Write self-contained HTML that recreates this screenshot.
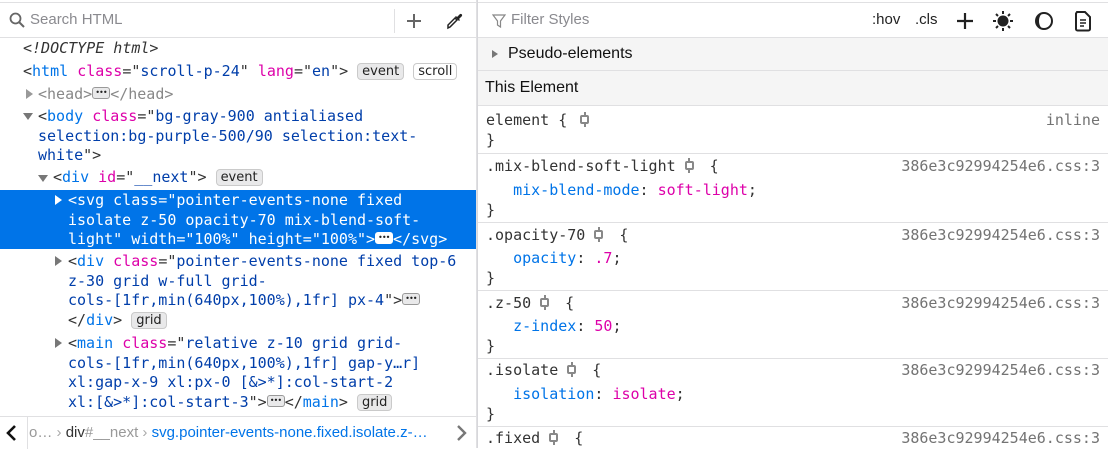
<!DOCTYPE html>
<html><head><style>
*{margin:0;padding:0;box-sizing:border-box}
body{width:1108px;height:448px;overflow:hidden;background:#fff;font-family:"Liberation Sans",sans-serif;position:relative}
.mono{font-family:"DejaVu Sans Mono",monospace;font-size:15px}
#left{position:absolute;left:0;top:0;width:477px;height:448px;border-right:1px solid #e0e0e2}
#right{position:absolute;left:477px;top:0;width:631px;height:448px;border-left:1px solid #d7d7db}
.tb{position:absolute;top:2px;left:0;right:0;height:36px;border-top:1px solid #e0e0e2;border-bottom:1px solid #e0e0e2;background:#fff}
.ph{color:#8a8a8f;font-size:15px;position:absolute;top:8px}
.ln{position:absolute;white-space:pre;line-height:19.5px;color:#333}
.t{color:#0074e8}.an{color:#dd00a9}.av{color:#003eaa}.p{color:#333}
.sel{position:absolute;left:0;width:476px;top:190px;height:59px;background:#0074e8}
.sel .ln,.sel span{color:#fff}
.bd{display:inline-block;font-family:"DejaVu Sans",sans-serif;font-size:13px;line-height:15px;padding:0 4px;border:1px solid #cacaca;background:#e9e9ea;border-radius:4px;color:#222;vertical-align:1px}
.bd.o{background:#fff}
.dots{display:inline-block;width:18px;height:12px;border:1px solid #999;background:#e9e9ea;border-radius:3px;vertical-align:0;position:relative}
.dots:after{content:"•••";position:absolute;left:2px;top:-5px;font-size:8px;letter-spacing:-1px;color:#222}
.tri{position:absolute;width:0;height:0}
.tr{border-top:5px solid transparent;border-bottom:5px solid transparent;border-left:7px solid #777}
.td{border-left:5px solid transparent;border-right:5px solid transparent;border-top:7px solid #777}
.rule{position:absolute;left:0;right:0;border-top:1px solid #e0e0e2}
.rl{position:absolute;left:8px;white-space:pre;color:#333;line-height:20px}
.src{position:absolute;right:8px;color:#737373;line-height:20px}
.gear{display:inline-block;width:15px;height:15px;vertical-align:-2px;position:relative;margin:0 4px}
.gear:before{content:"";position:absolute;left:3px;top:3px;width:9px;height:9px;border:2px solid #888;border-radius:2px;box-sizing:border-box}
.gear:after{content:"";position:absolute;left:6.5px;top:0;width:2px;height:15px;background:linear-gradient(#888 0 3px,transparent 3px 12px,#888 12px)}
.pr{color:#0074e8}.vl{color:#dd00a9}
</style></head><body>
<div id="left">
 <div class="tb">
  <svg style="position:absolute;left:9px;top:9px" width="16" height="16" viewBox="0 0 16 16"><circle cx="6.5" cy="6.5" r="5" fill="none" stroke="#666" stroke-width="1.8"/><path d="M10 10l5 5" stroke="#666" stroke-width="2"/></svg>
  <div class="ph" style="left:30px">Search HTML</div>
  <div style="position:absolute;left:394px;top:6px;width:1px;height:24px;background:#e0e0e2"></div>
  <svg style="position:absolute;left:406px;top:10px" width="16" height="16"><path d="M8 1v14M1 8h14" stroke="#666" stroke-width="2"/></svg>
  <svg style="position:absolute;left:446px;top:9px" width="18" height="18" viewBox="0 0 18 18"><path d="M2 16l2-1 7-7-2-2-7 7z" fill="none" stroke="#222" stroke-width="1.5"/><path d="M9 5l4 4 1-1-1-1 3-3a1.5 1.5 0 0 0-2-2l-3 3-1-1z" fill="#222"/></svg>
 </div>
 <div class="mono">
  <div class="ln" style="left:23px;top:39px;font-style:italic">&lt;!DOCTYPE html&gt;</div>
  <div class="ln" style="left:23px;top:62px">&lt;<span class="t">html</span> <span class="an">class</span>="<span class="av">scroll-p-24</span>" <span class="an">lang</span>="<span class="av">en</span>"&gt; <span class="bd">event</span> <span class="bd o">scroll</span></div>
  <div class="tri tr" style="left:26px;top:89px;border-left-color:#999"></div>
  <div class="ln" style="left:38px;top:85px;color:#888">&lt;head&gt;<span class="dots"></span>&lt;/head&gt;</div>
  <div class="tri td" style="left:23px;top:113px"></div>
  <div class="ln" style="left:38px;top:107px">&lt;<span class="t">body</span> <span class="an">class</span>="<span class="av">bg-gray-900 antialiased
selection:bg-purple-500/90 selection:text-
white</span>"&gt;</div>
  <div class="tri td" style="left:38px;top:175px"></div>
  <div class="ln" style="left:53px;top:168px">&lt;<span class="t">div</span> <span class="an">id</span>="<span class="av">__next</span>"&gt; <span class="bd">event</span></div>
 </div>
 <div class="sel mono">
  <div class="tri tr" style="left:55px;top:5px;border-left-color:#fff"></div>
  <div class="ln" style="left:68px;top:1px">&lt;svg class="pointer-events-none fixed
isolate z-50 opacity-70 mix-blend-soft-
light" width="100%" height="100%"&gt;<span class="dots" style="background:#fff;border-color:#fff"></span>&lt;/svg&gt;</div>
 </div>
 <div class="mono">
  <div class="tri tr" style="left:55px;top:256px"></div>
  <div class="ln" style="left:68px;top:252px">&lt;<span class="t">div</span> <span class="an">class</span>="<span class="av">pointer-events-none fixed top-6
z-30 grid w-full grid-
cols-[1fr,min(640px,100%),1fr] px-4</span>"&gt;<span class="dots"></span>
&lt;/<span class="t">div</span>&gt; <span class="bd">grid</span></div>
  <div class="tri tr" style="left:55px;top:338px"></div>
  <div class="ln" style="left:68px;top:334px">&lt;<span class="t">main</span> <span class="an">class</span>="<span class="av">relative z-10 grid grid-
cols-[1fr,min(640px,100%),1fr] gap-y…r]
xl:gap-x-9 xl:px-0 [&amp;&gt;*]:col-start-2
xl:[&amp;&gt;*]:col-start-3</span>"&gt;<span class="dots"></span>&lt;/<span class="t">main</span>&gt; <span class="bd">grid</span></div>
 </div>
 <div style="position:absolute;left:0;right:0;top:416px;height:32px;border-top:1px solid #e0e0e2;font-size:15px">
  <svg style="position:absolute;left:5px;top:7px" width="14" height="18"><path d="M10 2L3 9l7 7" fill="none" stroke="#111" stroke-width="2.6"/></svg>
  <div style="position:absolute;left:27px;top:0;width:1px;height:32px;background:#e0e0e2"></div>
  <div style="position:absolute;left:29px;top:7px;white-space:nowrap;color:#999">o…  <span style="color:#aaa">›</span>  <span style="color:#333">div</span>#__next  <span style="color:#aaa">›</span>  <span style="color:#0074e8">svg.pointer-events-none.fixed.isolate.z-…</span></div>
  <div style="position:absolute;left:446px;top:0;width:30px;height:31px;background:#fff"></div>
  <svg style="position:absolute;left:454px;top:7px" width="14" height="18"><path d="M4 2l7 7-7 7" fill="none" stroke="#777" stroke-width="2.4"/></svg>
 </div>
</div>
<div id="right">
 <div class="tb">
  <svg style="position:absolute;left:14px;top:11px" width="14" height="14" viewBox="0 0 14 14"><path d="M1 1h12L8.5 7v6L5.5 11V7z" fill="none" stroke="#888" stroke-width="1.2"/></svg>
  <div class="ph" style="left:33px">Filter Styles</div>
  <div style="position:absolute;left:394px;top:8px;font-size:15px;color:#222">:hov</div>
  <div style="position:absolute;left:437px;top:8px;font-size:15px;color:#222">.cls</div>
  <svg style="position:absolute;left:478px;top:9px" width="18" height="18"><path d="M9 1v16M1 9h16" stroke="#222" stroke-width="2.2"/></svg>
  <svg style="position:absolute;left:514px;top:7px" width="22" height="22" viewBox="0 0 22 22"><circle cx="11" cy="11" r="5.5" fill="#222"/><g stroke="#222" stroke-width="2"><path d="M11 1v3M11 18v3M1 11h3M18 11h3M4 4l2 2M16 16l2 2M4 18l2-2M16 6l2-2"/></g></svg>
  <svg style="position:absolute;left:556px;top:8px" width="20" height="20" viewBox="0 0 20 20"><circle cx="10" cy="10" r="8" fill="none" stroke="#222" stroke-width="2"/><path d="M10 2A8 8 0 0 0 10 18A5 8 0 0 1 10 2Z" fill="#222"/></svg>
  <svg style="position:absolute;left:596px;top:7px" width="18" height="22" viewBox="0 0 18 22"><path d="M3 2h8l5 5v12a1.5 1.5 0 0 1-1.5 1.5h-11A1.5 1.5 0 0 1 2 19V3.5z" fill="none" stroke="#222" stroke-width="2"/><path d="M6 10h6M6 13h6M6 16h4" stroke="#222" stroke-width="1.5"/></svg>
 </div>
 <div style="position:absolute;left:0;right:0;top:38px;height:33px;background:#f5f5f5;border-bottom:1px solid #e0e0e2">
  <div class="tri tr" style="left:14px;top:12px;border-left-color:#777;border-top-width:4.5px;border-bottom-width:4.5px;border-left-width:6px"></div>
  <div style="position:absolute;left:30px;top:7px;font-size:16px;color:#111">Pseudo-elements</div>
 </div>
 <div style="position:absolute;left:0;right:0;top:71px;height:35px;background:#f5f5f5;border-bottom:1px solid #e0e0e2">
  <div style="position:absolute;left:7px;top:8px;font-size:16px;color:#111">This Element</div>
 </div>
 <div class="mono">
  <div class="rl" style="top:110px">element {<span class="gear" style="margin-left:10px"></span></div>
  <div class="src" style="top:110px">inline</div>
  <div class="rl" style="top:130px">}</div>
  <div class="rule" style="top:153px"></div>
  <div class="rl" style="top:156px">.mix-blend-soft-light<span class="gear" style="margin-left:6px"></span> {</div>
  <div class="src" style="top:156px">386e3c92994254e6.css:3</div>
  <div class="rl" style="top:180px">   <span class="pr">mix-blend-mode</span>: <span class="vl">soft-light</span>;</div>
  <div class="rl" style="top:200px">}</div>
  <div class="rule" style="top:222px"></div>
  <div class="rl" style="top:225px">.opacity-70<span class="gear" style="margin-left:6px"></span> {</div>
  <div class="src" style="top:225px">386e3c92994254e6.css:3</div>
  <div class="rl" style="top:248px">   <span class="pr">opacity</span>: <span class="vl">.7</span>;</div>
  <div class="rl" style="top:268px">}</div>
  <div class="rule" style="top:290px"></div>
  <div class="rl" style="top:293px">.z-50<span class="gear" style="margin-left:6px"></span> {</div>
  <div class="src" style="top:293px">386e3c92994254e6.css:3</div>
  <div class="rl" style="top:316px">   <span class="pr">z-index</span>: <span class="vl">50</span>;</div>
  <div class="rl" style="top:336px">}</div>
  <div class="rule" style="top:358px"></div>
  <div class="rl" style="top:360px">.isolate<span class="gear" style="margin-left:6px"></span> {</div>
  <div class="src" style="top:360px">386e3c92994254e6.css:3</div>
  <div class="rl" style="top:384px">   <span class="pr">isolation</span>: <span class="vl">isolate</span>;</div>
  <div class="rl" style="top:404px">}</div>
  <div class="rule" style="top:426px"></div>
  <div class="rl" style="top:428px">.fixed<span class="gear" style="margin-left:6px"></span> {</div>
  <div class="src" style="top:428px">386e3c92994254e6.css:3</div>
 </div>
</div>
</body></html>
